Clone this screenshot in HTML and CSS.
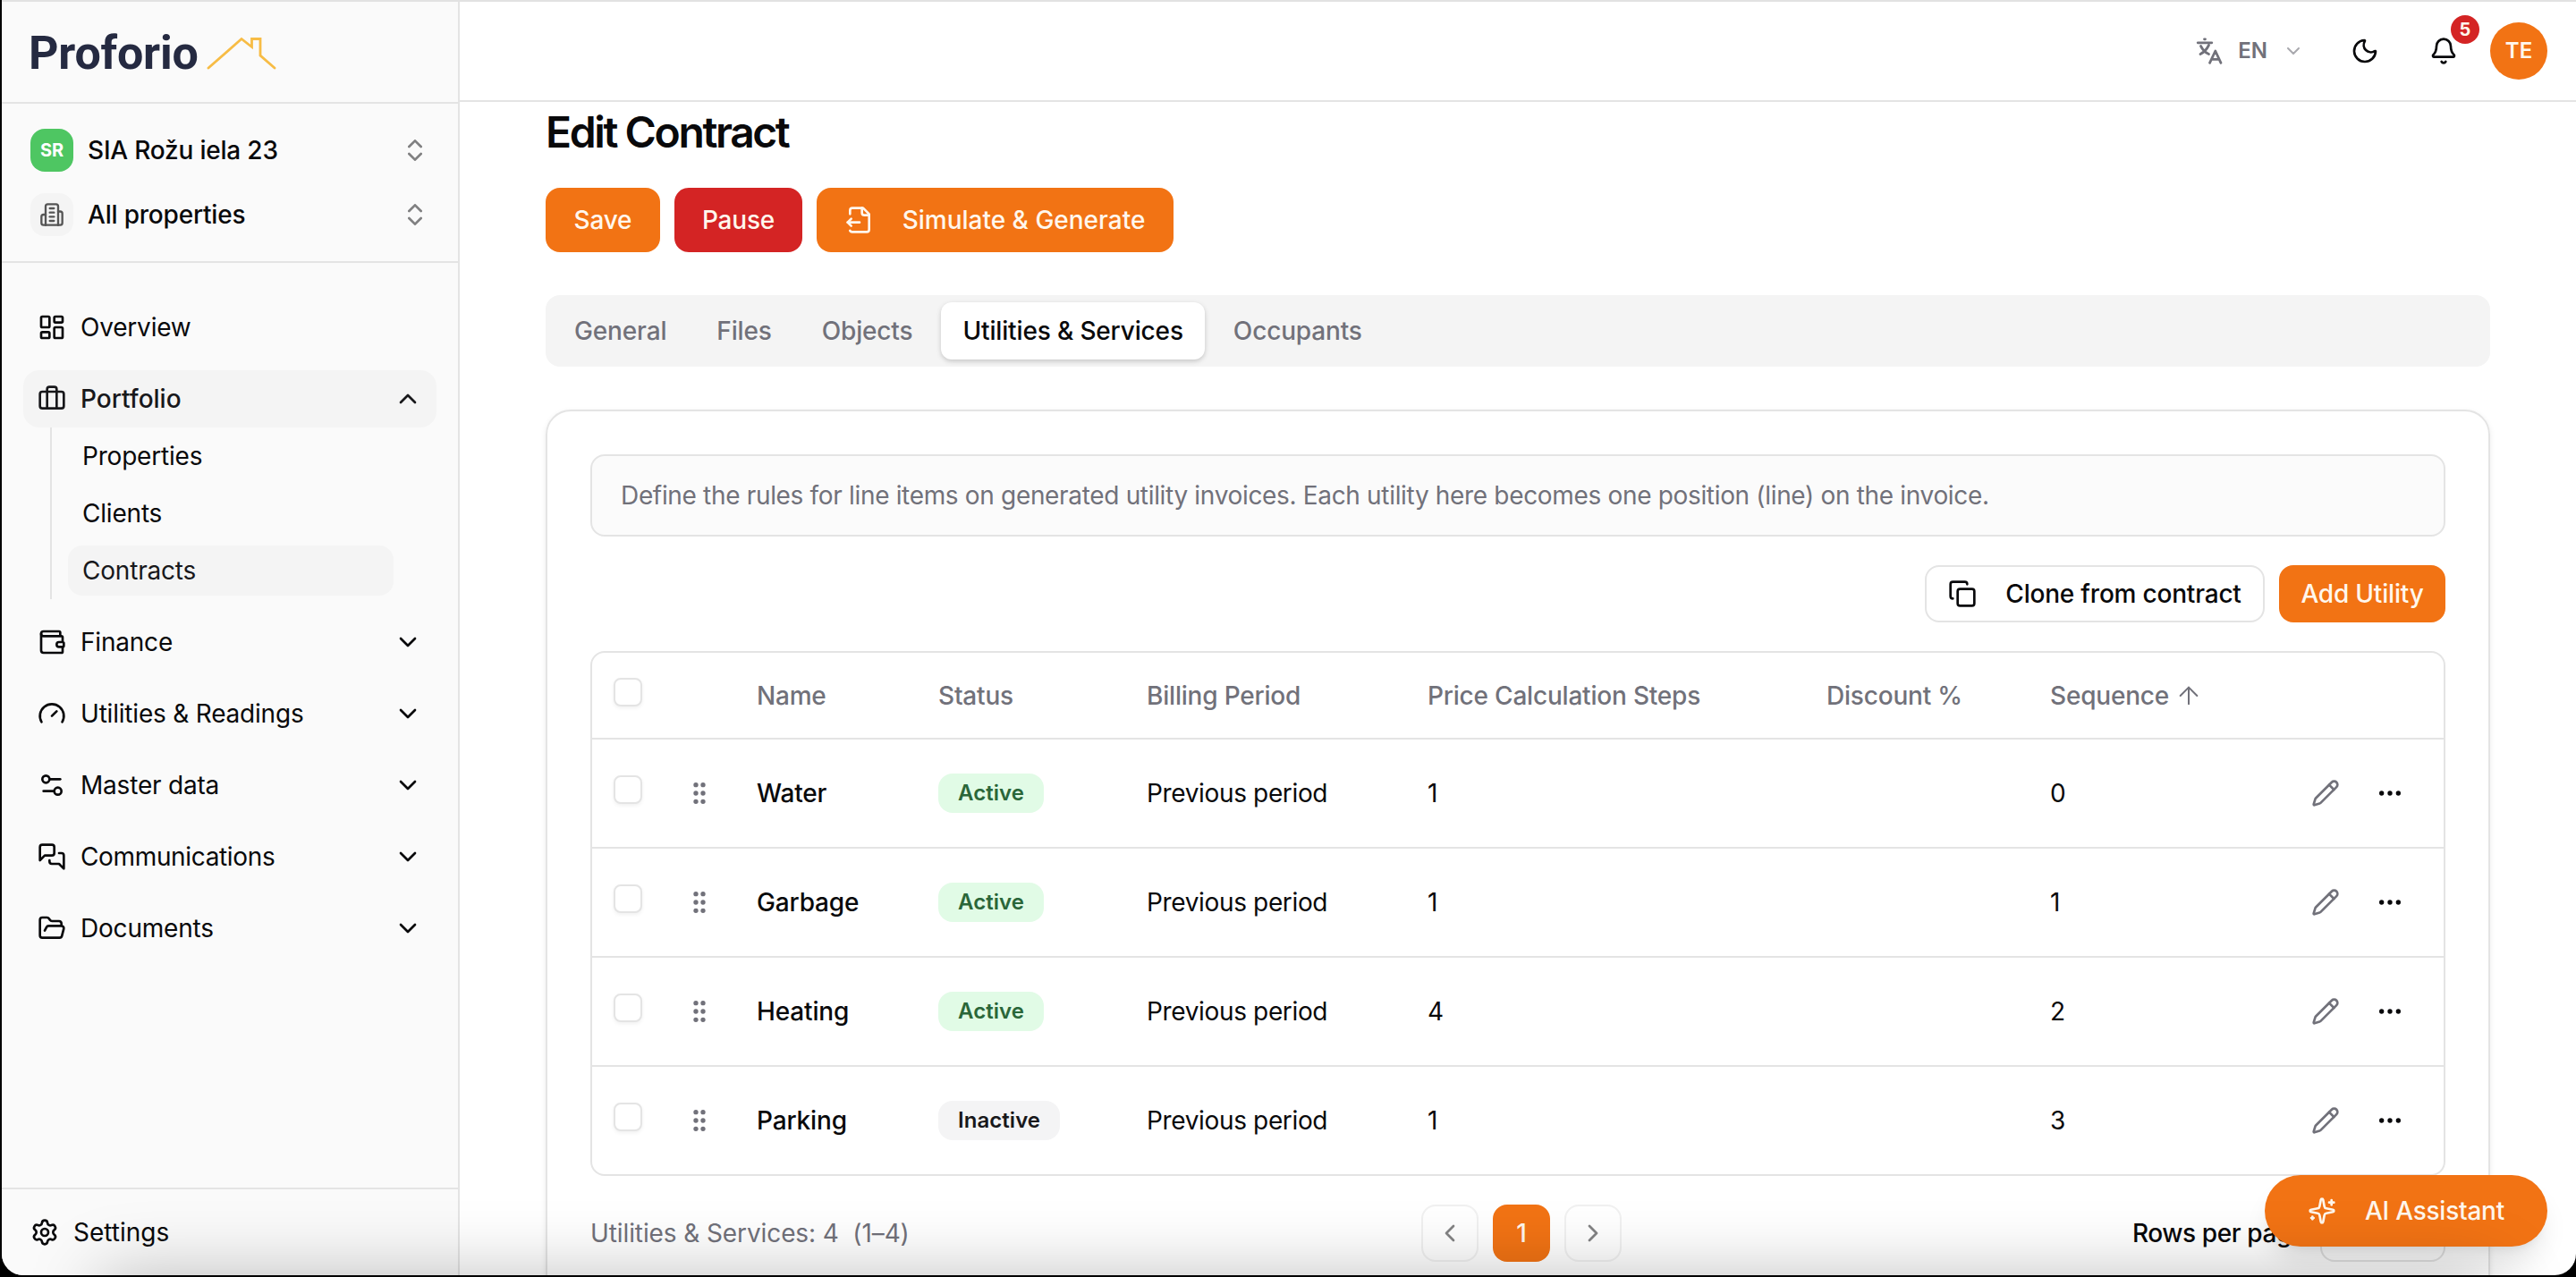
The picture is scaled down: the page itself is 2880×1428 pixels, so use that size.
FILE: index.html
```html
<!DOCTYPE html>
<html lang="en">
<head>
<meta charset="utf-8">
<title>Proforio – Edit Contract</title>
<link rel="stylesheet" href="styles.css">
</head>
<body>
<svg class="sprite" aria-hidden="true">
  <symbol id="i-updown" viewBox="0 0 24 24"><path d="m7 15 5 5 5-5"/><path d="m7 9 5-5 5 5"/></symbol>
  <symbol id="i-down" viewBox="0 0 24 24"><path d="m6 9 6 6 6-6"/></symbol>
  <symbol id="i-up" viewBox="0 0 24 24"><path d="m18 15-6-6-6 6"/></symbol>
  <symbol id="i-left" viewBox="0 0 24 24"><path d="m15 18-6-6 6-6"/></symbol>
  <symbol id="i-right" viewBox="0 0 24 24"><path d="m9 18 6-6-6-6"/></symbol>
  <symbol id="i-grip" viewBox="0 0 24 24"><circle cx="9" cy="12" r="1"/><circle cx="9" cy="5" r="1"/><circle cx="9" cy="19" r="1"/><circle cx="15" cy="12" r="1"/><circle cx="15" cy="5" r="1"/><circle cx="15" cy="19" r="1"/></symbol>
  <symbol id="i-pencil" viewBox="0 0 24 24"><path d="M21.174 6.812a1 1 0 0 0-3.986-3.987L3.842 16.174a2 2 0 0 0-.5.83l-1.321 4.352a.5.5 0 0 0 .623.622l4.353-1.32a2 2 0 0 0 .83-.497z"/><path d="m15 5 4 4"/></symbol>
  <symbol id="i-dots" viewBox="0 0 24 24"><circle cx="12" cy="12" r="1"/><circle cx="19" cy="12" r="1"/><circle cx="5" cy="12" r="1"/></symbol>
</svg>
<div class="app">
  <aside class="sidebar">
    <div class="brand">
      <span class="brand-name">Proforio</span>
      <svg class="brand-roof" viewBox="0 0 80 40"><path d="M2 36 39 3.500 50.500 12.500V3.500H60V22L76 36"/></svg>
    </div>
    <div class="switchers">
      <div class="switcher"><span class="tile tile-org">SR</span><span class="switcher-name">SIA Rožu iela 23</span><svg class="icon dim"><use href="#i-updown"/></svg></div>
      <div class="switcher"><span class="tile"><svg class="icon building" viewBox="0 0 24 24"><path d="M6 22V4a2 2 0 0 1 2-2h8a2 2 0 0 1 2 2v18Z"/><path d="M6 12H4a2 2 0 0 0-2 2v6a2 2 0 0 0 2 2h2"/><path d="M18 9h2a2 2 0 0 1 2 2v9a2 2 0 0 1-2 2h-2"/><path d="M10 6h4"/><path d="M10 10h4"/><path d="M10 14h4"/><path d="M10 18h4"/></svg></span><span class="switcher-name">All properties</span><svg class="icon dim"><use href="#i-updown"/></svg></div>
    </div>
    <nav class="nav">
      <a class="nav-item"><svg class="icon" viewBox="0 0 24 24"><rect width="7" height="9" x="3" y="3" rx="1"/><rect width="7" height="5" x="14" y="3" rx="1"/><rect width="7" height="9" x="14" y="12" rx="1"/><rect width="7" height="5" x="3" y="16" rx="1"/></svg><span>Overview</span></a>
      <div>
        <a class="nav-item current"><svg class="icon" viewBox="0 0 24 24"><path d="M16 20V4a2 2 0 0 0-2-2h-4a2 2 0 0 0-2 2v16"/><rect width="20" height="14" x="2" y="6" rx="2"/></svg><span>Portfolio</span><svg class="icon"><use href="#i-up"/></svg></a>
        <div class="subnav"><a>Properties</a><a>Clients</a><a class="current">Contracts</a></div>
      </div>
      <a class="nav-item"><svg class="icon" viewBox="0 0 24 24"><path d="M19 7V4a1 1 0 0 0-1-1H5a2 2 0 0 0 0 4h15a1 1 0 0 1 1 1v4h-3a2 2 0 0 0 0 4h3a1 1 0 0 0 1-1v-2a1 1 0 0 0-1-1"/><path d="M3 5v14a2 2 0 0 0 2 2h15a1 1 0 0 0 1-1v-4"/></svg><span>Finance</span><svg class="icon"><use href="#i-down"/></svg></a>
      <a class="nav-item"><svg class="icon" viewBox="0 0 24 24"><path d="m12 14 4-4"/><path d="M3.340 19a10 10 0 1 1 17.320 0"/></svg><span>Utilities &amp; Readings</span><svg class="icon"><use href="#i-down"/></svg></a>
      <a class="nav-item"><svg class="icon" viewBox="0 0 24 24"><path d="M14 17H5"/><path d="M19 7h-9"/><circle cx="17" cy="17" r="3"/><circle cx="7" cy="7" r="3"/></svg><span>Master data</span><svg class="icon"><use href="#i-down"/></svg></a>
      <a class="nav-item tight"><svg class="icon" viewBox="0 0 24 24"><path d="M14 9a2 2 0 0 1-2 2H6l-4 4V4a2 2 0 0 1 2-2h8a2 2 0 0 1 2 2z"/><path d="M18 9h2a2 2 0 0 1 2 2v11l-4-4h-6a2 2 0 0 1-2-2v-1"/></svg><span>Communications</span><svg class="icon"><use href="#i-down"/></svg></a>
      <a class="nav-item"><svg class="icon" viewBox="0 0 24 24"><path d="m6 14 1.500-2.900A2 2 0 0 1 9.240 10H20a2 2 0 0 1 1.940 2.500l-1.540 6a2 2 0 0 1-1.950 1.500H4a2 2 0 0 1-2-2V5a2 2 0 0 1 2-2h3.900a2 2 0 0 1 1.690.9l.810 1.200a2 2 0 0 0 1.670.9H18a2 2 0 0 1 2 2v2"/></svg><span>Documents</span><svg class="icon"><use href="#i-down"/></svg></a>
    </nav>
    <a class="settings"><svg class="icon" viewBox="0 0 24 24"><path d="M9.671 4.136a2.340 2.340 0 0 1 4.659 0 2.340 2.340 0 0 0 3.319 1.915 2.340 2.340 0 0 1 2.330 4.033 2.340 2.340 0 0 0 0 3.831 2.340 2.340 0 0 1-2.330 4.033 2.340 2.340 0 0 0-3.319 1.915 2.340 2.340 0 0 1-4.659 0 2.340 2.340 0 0 0-3.320-1.915 2.340 2.340 0 0 1-2.330-4.033 2.340 2.340 0 0 0 0-3.831A2.340 2.340 0 0 1 6.350 6.051a2.340 2.340 0 0 0 3.319-1.915"/><circle cx="12" cy="12" r="3"/></svg><span>Settings</span></a>
  </aside>
  <div class="main">
    <header class="topbar">
      <div class="lang"><svg class="icon translate" viewBox="0 0 32 32"><path d="M10.500 2.800H11.500M3.200 6.800H18.800M15.500 9.500C13.500 13.500 10 17.500 6 19.500M6.500 10.500C8.500 14.500 12 18 15.500 19.500M16.500 29.300 22.800 16 29 29.300M19 25.300H26.500"/></svg><span class="lang-code">EN</span><svg class="icon lang-caret"><use href="#i-down"/></svg></div>
      <svg class="icon moon" viewBox="0 0 24 24"><path d="M20.985 12.486a9 9 0 1 1-9.473-9.472c.405-.022.617.46.402.803a6 6 0 0 0 8.268 8.268c.344-.215.825-.004.803.401"/></svg>
      <div class="bell"><svg class="icon" viewBox="0 0 24 24"><path d="M10.268 21a2 2 0 0 0 3.464 0"/><path d="M3.262 15.326A1 1 0 0 0 4 17h16a1 1 0 0 0 .740-1.673C19.410 13.956 18 12.499 18 8A6 6 0 0 0 6 8c0 4.499-1.411 5.956-2.738 7.326"/></svg><span class="count">5</span></div>
      <span class="avatar">TE</span>
    </header>
    <main class="content">
      <h1>Edit Contract</h1>
      <div class="actions">
        <button class="btn save">Save</button>
        <button class="btn danger">Pause</button>
        <button class="btn simulate"><svg class="icon" viewBox="0 0 24 24"><path d="M14 2v4a2 2 0 0 0 2 2h4"/><path d="M4 7V4a2 2 0 0 1 2-2h9l5 5v13a2 2 0 0 1-2 2H6a2 2 0 0 1-2-1"/><path d="m5 11-3 3"/><path d="m5 17-3-3h10"/></svg><span>Simulate &amp; Generate</span></button>
      </div>
      <div class="tabs"><a>General</a><a>Files</a><a>Objects</a><a class="current">Utilities &amp; Services</a><a>Occupants</a></div>
      <section class="card">
        <p class="note">Define the rules for line items on generated utility invoices. Each utility here becomes one position (line) on the invoice.</p>
        <div class="toolbar">
          <button class="btn small outline"><svg class="icon" viewBox="0 0 24 24"><rect width="14" height="14" x="8" y="8" rx="2"/><path d="M4 16c-1.100 0-2-.9-2-2V4c0-1.100.9-2 2-2h10c1.100 0 2 .9 2 2"/></svg><span>Clone from contract</span></button>
          <button class="btn small add">Add Utility</button>
        </div>
        <div class="table">
          <div class="row head"><i class="check"></i><span></span><span>Name</span><span>Status</span><span>Billing Period</span><span>Price Calculation Steps</span><span>Discount %</span><span class="sorted">Sequence<svg class="icon thin" viewBox="0 0 24 24"><path d="m5 12 7-7 7 7"/><path d="M12 19V5"/></svg></span><span></span></div>
          <div class="row"><i class="check"></i><svg class="icon grip"><use href="#i-grip"/></svg><b>Water</b><span><em class="badge on">Active</em></span><span>Previous period</span><span>1</span><span></span><span>0</span><span class="tools"><svg class="icon grip"><use href="#i-pencil"/></svg><svg class="icon"><use href="#i-dots"/></svg></span></div>
          <div class="row"><i class="check"></i><svg class="icon grip"><use href="#i-grip"/></svg><b>Garbage</b><span><em class="badge on">Active</em></span><span>Previous period</span><span>1</span><span></span><span>1</span><span class="tools"><svg class="icon grip"><use href="#i-pencil"/></svg><svg class="icon"><use href="#i-dots"/></svg></span></div>
          <div class="row"><i class="check"></i><svg class="icon grip"><use href="#i-grip"/></svg><b>Heating</b><span><em class="badge on">Active</em></span><span>Previous period</span><span>4</span><span></span><span>2</span><span class="tools"><svg class="icon grip"><use href="#i-pencil"/></svg><svg class="icon"><use href="#i-dots"/></svg></span></div>
          <div class="row"><i class="check"></i><svg class="icon grip"><use href="#i-grip"/></svg><b>Parking</b><span><em class="badge">Inactive</em></span><span>Previous period</span><span>1</span><span></span><span>3</span><span class="tools"><svg class="icon grip"><use href="#i-pencil"/></svg><svg class="icon"><use href="#i-dots"/></svg></span></div>
        </div>
        <div class="pager">
          <span class="summary">Utilities &amp; Services: 4 &nbsp;(1–4)</span>
          <div class="pages"><span class="page off"><svg class="icon"><use href="#i-left"/></svg></span><span class="page current">1</span><span class="page off"><svg class="icon"><use href="#i-right"/></svg></span></div>
          <div class="per-page"><span>Rows per page</span><span class="select"></span></div>
        </div>
      </section>
    </main>
  </div>
  <button class="assistant"><svg class="icon" viewBox="0 0 24 24"><path d="M11.017 2.814a1 1 0 0 1 1.966 0l1.051 5.558a2 2 0 0 0 1.594 1.594l5.558 1.051a1 1 0 0 1 0 1.966l-5.558 1.051a2 2 0 0 0-1.594 1.594l-1.051 5.558a1 1 0 0 1-1.966 0l-1.051-5.558a2 2 0 0 0-1.594-1.594l-5.558-1.051a1 1 0 0 1 0-1.966l5.558-1.051a2 2 0 0 0 1.594-1.594z"/><path d="M20 3v4"/><path d="M22 5h-4"/><path d="M4 17v2"/><path d="M5 18H3"/></svg><span>AI Assistant</span></button>
  <div class="edge-shade"></div>
</div>
</body>
</html>
```
FILE: styles.css
```css
* { box-sizing: border-box; }

body {
  margin: 0;
  width: 2880px;
  height: 1428px;
  overflow: hidden;
  background: #000;
  color: #09090b;
  font: 400 28px/40px Inter, "Liberation Sans", sans-serif;
  letter-spacing: -.2px;
}

.sprite { position: absolute; width: 0; height: 0; }

.icon {
  flex: none;
  width: 32px;
  height: 32px;
  fill: none;
  stroke: currentColor;
  stroke-width: 2;
  stroke-linecap: round;
  stroke-linejoin: round;
}

.app {
  position: relative;
  display: flex;
  height: 1426px;
  margin-left: 2px;
  border-top: 2px solid #e2e2e2;
  border-radius: 0 0 24px 24px;
  background: #fff;
  overflow: hidden;
}

/* Sidebar */
.sidebar {
  display: flex;
  flex-direction: column;
  flex: none;
  width: 512px;
  border-right: 2px solid #e4e4e4;
  background: #fafafa;
}

.brand {
  display: flex;
  align-items: center;
  gap: 9px;
  height: 114px;
  padding: 3px 0 0 30px;
  border-bottom: 2px solid #e4e4e4;
}
.brand-name {
  color: #252a41;
  font: 700 52px/60px Roboto, Inter, sans-serif;
}
.brand-roof { width: 80px; height: 40px; fill: none; stroke: #f7bc45; stroke-width: 2.8; stroke-linecap: round; stroke-linejoin: miter; }

.switchers {
  display: flex;
  flex-direction: column;
  gap: 24px;
  height: 178px;
  padding: 28px 32px 0;
  border-bottom: 2px solid #e4e4e4;
}
.switcher { display: flex; align-items: center; gap: 16px; height: 48px; font-weight: 500; }
.switcher-name { flex: 1; }
.tile {
  display: flex;
  align-items: center;
  justify-content: center;
  width: 48px;
  height: 48px;
  border-radius: 16px;
  background: #f4f4f4;
  color: #555;
}
.tile-org { background: #4ec662; color: #fff; font-size: 20px; font-weight: 700; }
.building { width: 28px; height: 28px; }
.dim { opacity: .5; }

.nav { display: flex; flex-direction: column; gap: 16px; flex: 1; padding: 40px 24px 0; }
.nav-item { display: flex; align-items: center; gap: 16px; height: 64px; padding: 0 16px; border-radius: 18px; }
.nav-item span { flex: 1; }
.nav-item.current { background: #f4f4f4; color: #18181b; font-weight: 500; letter-spacing: 0; }
.nav-item.tight { letter-spacing: -.35px; }
.subnav {
  display: flex;
  flex-direction: column;
  gap: 8px;
  margin: 0 48px 0 30px;
  padding: 4px 0 4px 18px;
  border-left: 2px solid #e4e4e4;
}
.subnav a { height: 56px; padding: 0 16px; border-radius: 16px; line-height: 56px; }
.subnav .current { background: #f4f4f4; color: #18181b; }
.settings { display: flex; align-items: center; gap: 16px; height: 98px; padding: 0 32px; border-top: 2px solid #e4e4e4; letter-spacing: 0; }

/* Top bar */
.main { flex: 1; min-width: 0; }
.topbar {
  display: flex;
  align-items: center;
  justify-content: flex-end;
  height: 112px;
  padding-right: 32px;
  border-bottom: 2px solid #e4e4e4;
  letter-spacing: 0;
}
.lang { display: flex; align-items: center; color: #71717a; }
.translate { stroke-width: 2.8; }
.lang-code { margin: 0 17px 0 16px; font-size: 24px; font-weight: 600; }
.lang-caret { width: 24px; height: 24px; opacity: .6; }
.moon { margin: 0 56px 0 52px; }
.bell { position: relative; display: flex; margin-right: 36px; }
.count {
  position: absolute;
  left: 24px;
  top: -24px;
  width: 32px;
  border-radius: 16px;
  background: #d42424;
  color: #fff7ed;
  font-size: 20px;
  font-weight: 700;
  line-height: 32px;
  text-align: center;
}
.avatar {
  width: 64px;
  border-radius: 32px;
  background: #f27314;
  color: #fff7ed;
  font-size: 24px;
  font-weight: 600;
  line-height: 64px;
  text-align: center;
}

/* Page */
.content { padding: 4px 96px 0; }
h1 { margin: 0; font-size: 48px; font-weight: 600; line-height: 60px; letter-spacing: -2.4px; }
.actions { display: flex; gap: 16px; margin-top: 32px; }
.btn {
  display: flex;
  align-items: center;
  justify-content: center;
  gap: 32px;
  height: 72px;
  padding: 0;
  border: 0;
  border-radius: 16px;
  background: #f27314;
  color: #fff7ed;
  font: inherit;
  font-weight: 500;
  letter-spacing: -.2px;
  white-space: nowrap;
}
.save { width: 128px; }
.danger { width: 143px; background: #d42424; }
.simulate { width: 399px; letter-spacing: 0; }
.small { height: 64px; }
.add { width: 186px; }
.outline { width: 380px; border: 2px solid #e4e4e4; background: #fff; color: #09090b; }

.tabs {
  display: flex;
  gap: 8px;
  height: 80px;
  margin-top: 48px;
  padding: 8px;
  border-radius: 16px;
  background: #f4f4f4;
  color: #71717a;
  font-weight: 500;
  letter-spacing: -.15px;
}
.tabs a { padding: 0 24px; border-radius: 12px; line-height: 64px; }
.tabs .current { background: #fff; color: #09090b; box-shadow: 0 2px 6px rgba(0, 0, 0, .12), 0 2px 4px rgba(0, 0, 0, .08); }

.card {
  height: 1100px;
  margin-top: 48px;
  padding: 48px;
  border: 2px solid #e4e4e4;
  border-radius: 28px;
  box-shadow: 0 2px 6px rgba(0, 0, 0, .08);
}
.note {
  height: 92px;
  margin: 0;
  padding: 0 32px;
  border: 2px solid #e4e4e4;
  border-radius: 16px;
  background: #fbfbfb;
  color: #71717a;
  line-height: 88px;
  letter-spacing: -.33px;
  white-space: nowrap;
}
.toolbar { display: flex; justify-content: flex-end; gap: 16px; margin: 32px 0; }

.table { border: 2px solid #e4e4e4; border-radius: 16px; }
.row {
  display: grid;
  grid-template-columns: 80px 80px 203px 233px 314px 446px 250px 292px 1fr;
  align-items: center;
  height: 122px;
  padding-left: 24px;
  border-bottom: 2px solid #e4e4e4;
  letter-spacing: -.35px;
}
.row:last-child { height: 120px; border-bottom: 0; }
.row b { font-weight: 500; letter-spacing: -.15px; }
.row.head { height: 97px; color: #71717a; font-weight: 500; letter-spacing: -.2px; }
.check {
  width: 32px;
  height: 32px;
  margin-bottom: 8px;
  border: 2px solid #e4e4e4;
  border-radius: 8px;
  background: #fff;
  box-shadow: 0 2px 4px rgba(0, 0, 0, .06);
}
.grip { color: #71717a; }
.badge {
  display: block;
  width: fit-content;
  padding: 0 22px;
  border-radius: 16px;
  background: #f4f4f5;
  color: #18181b;
  font-size: 24px;
  font-style: normal;
  font-weight: 600;
  line-height: 44px;
  letter-spacing: .05px;
}
.badge.on { background: #e1fbe6; color: #2a6639; }
.sorted { display: flex; align-items: center; gap: 6px; }
.thin { stroke-width: 1.5; }
.tools { display: flex; gap: 40px; }

.pager { display: grid; grid-template-columns: 929px 224px 1fr; align-items: center; height: 64px; margin-top: 32px; }
.summary { color: #71717a; letter-spacing: -.1px; }
.pages { display: flex; gap: 16px; }
.page { display: flex; align-items: center; justify-content: center; width: 64px; height: 64px; border-radius: 16px; }
.page.off { border: 2px solid #e4e4e4; opacity: .5; }
.page.current { background: #f27314; color: #fff7ed; font-weight: 500; }
.per-page { display: flex; justify-content: flex-end; align-items: center; gap: 16px; font-weight: 500; letter-spacing: -.4px; }
.select { width: 140px; height: 64px; border: 2px solid #e4e4e4; border-radius: 16px; }

.assistant {
  position: absolute;
  right: 32px;
  bottom: 32px;
  display: flex;
  align-items: center;
  gap: 32px;
  width: 316px;
  height: 80px;
  padding: 0 0 0 48px;
  border: 0;
  border-radius: 40px;
  background: #f27314;
  color: #fff7ed;
  font: inherit;
  font-weight: 500;
  letter-spacing: -.25px;
  box-shadow: 0 20px 30px -6px rgba(0, 0, 0, .1), 0 8px 12px -8px rgba(0, 0, 0, .1);
}

/* Soft shade rising from the bottom edge of the window */
.edge-shade {
  position: absolute;
  left: 110px;
  right: 90px;
  bottom: -100px;
  height: 100px;
  box-shadow: 0 0 80px rgba(0, 0, 0, .25);
  pointer-events: none;
}
```
